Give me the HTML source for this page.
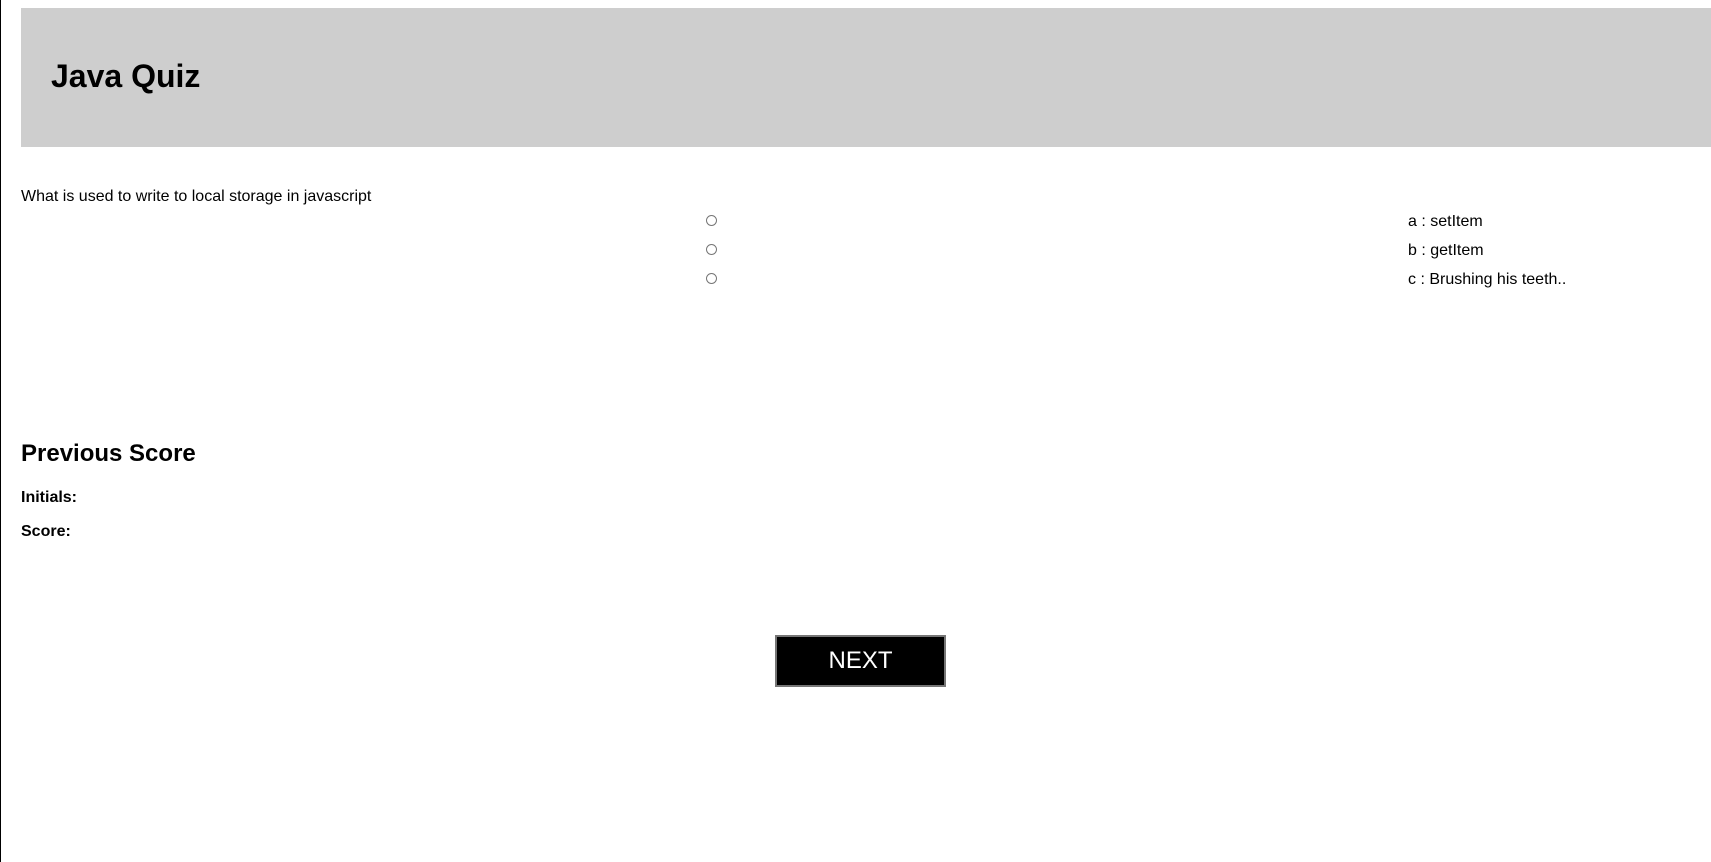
<!DOCTYPE html>
<html><head><meta charset="utf-8"><style>
html,body{margin:0;padding:0;width:1711px;height:862px;overflow:hidden;background:#fff;font-family:"Liberation Sans",Arial,sans-serif;color:#000}
.line{position:absolute;left:0;top:0;width:1px;height:862px;background:#000}
.hdr{position:absolute;left:21px;top:8px;width:1700px;height:139px;background:#cecece}
.hdr h1{position:absolute;left:30px;top:48px;margin:0;font-size:32px;font-weight:bold;line-height:40px}
.t{position:absolute;font-size:16px;line-height:20px;white-space:nowrap}
.r{position:absolute;width:11px;height:11px;border:1px solid #767676;border-radius:50%;background:#fff;box-sizing:border-box}
.btn{position:absolute;left:775px;top:635px;width:171px;height:52px;background:#000;border:2px solid #767676;box-sizing:border-box;color:#fff;font-size:24px;text-align:center;line-height:48px}
</style></head><body>
<div class="line"></div>
<div class="hdr"><h1>Java Quiz</h1></div>
<div class="t" style="left:21px;top:187px">What is used to write to local storage in javascript</div>
<div class="r" style="left:706px;top:215px"></div>
<div class="r" style="left:706px;top:244px"></div>
<div class="r" style="left:706px;top:273px"></div>
<div class="t" style="left:1408px;top:212px">a : setItem</div>
<div class="t" style="left:1408px;top:241px">b : getItem</div>
<div class="t" style="left:1408px;top:270px">c : Brushing his teeth..</div>
<div class="t" style="left:21px;top:439px;font-size:24px;line-height:30px;font-weight:bold">Previous Score</div>
<div class="t" style="left:21px;top:488px;font-weight:bold">Initials:</div>
<div class="t" style="left:21px;top:522px;font-weight:bold">Score:</div>
<div class="btn">NEXT</div>
</body></html>
